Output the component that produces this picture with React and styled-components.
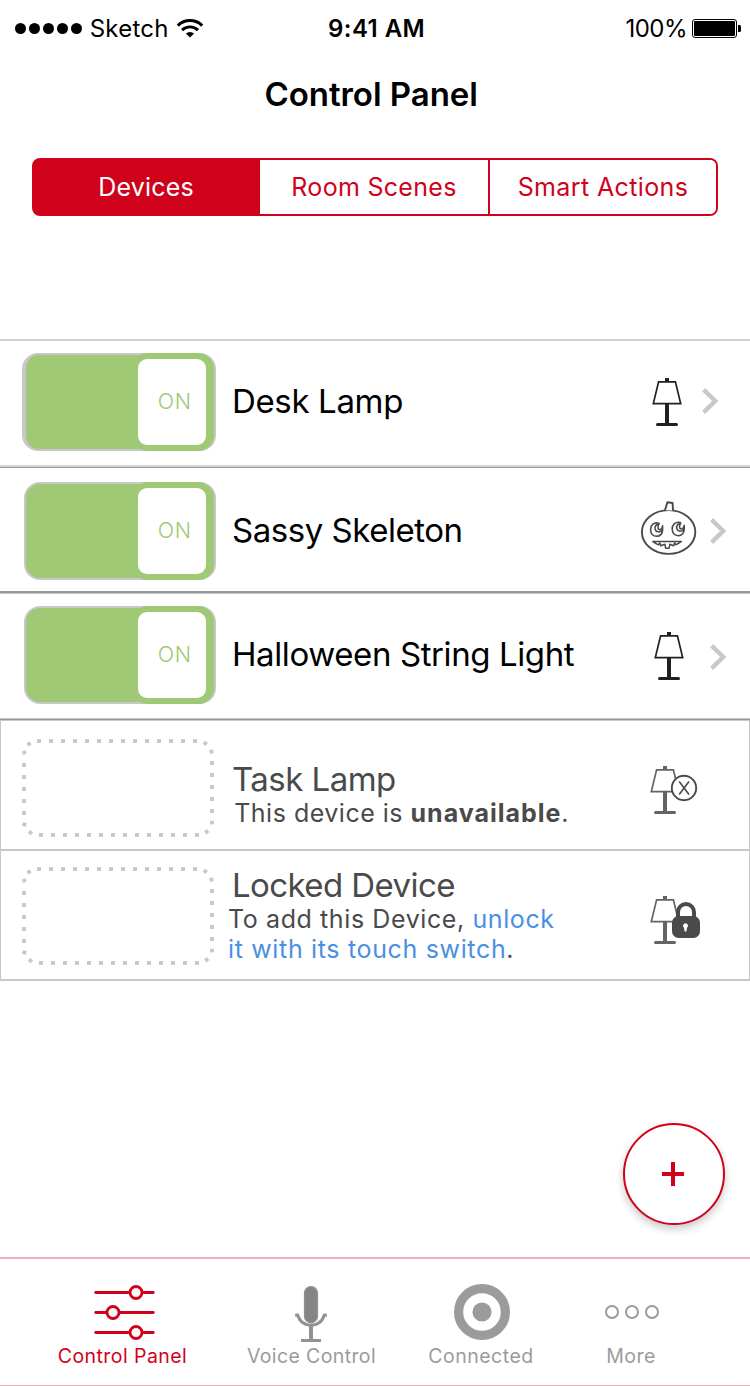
import React from 'react';
import styled, { createGlobalStyle } from 'styled-components';

const RED = '#d0021b';
const GREEN = '#a0c976';
const SILVER = '#c8c7cc';
const SLATE = '#4a4a4a';
const GREY = '#9b9b9b';

const GlobalStyle = createGlobalStyle`
  * { box-sizing: border-box; }
  body {
    margin: 0;
    background: #fff;
    color: #000;
    font-family: Inter, "Liberation Sans", sans-serif;
  }
  button { font: inherit; color: inherit; background: none; border: 0; padding: 0; margin: 0; }
  svg { display: block; flex: none; overflow: visible; }
`;

const Screen = styled.div`
  width: 750px;
  height: 1386px;
  display: flex;
  flex-direction: column;
  overflow: hidden;
  background: #fff;
`;

/* Status bar */

const StatusBar = styled.div`
  display: grid;
  grid-template-columns: 328px 1fr auto;
  height: 57px;
  align-items: center;
  padding-right: 9px;
  font-size: 24px;
  line-height: 30px;
  white-space: nowrap;
`;

const Carrier = styled.div`
  display: flex;
  align-items: center;
  padding-left: 14.6px;
  letter-spacing: 0.25px;
`;

const SignalDots = styled.div`
  display: flex;
  gap: 2.8px;
  margin-right: 8px;
`;

const SignalDot = styled.i`
  width: 11.2px;
  height: 11.2px;
  border-radius: 50%;
  background: #000;
`;

const WifiSlot = styled.span`
  margin-left: 7px;
`;

const Clock = styled.div`
  font-weight: 600;
  letter-spacing: 0.45px;
`;

const BatteryStatus = styled.div`
  display: flex;
  align-items: center;
  gap: 5px;
  letter-spacing: -0.51px;
`;

/* Header */

const Title = styled.h1`
  margin: 17px 0 0 264.4px;
  font-size: 33px;
  line-height: 40px;
  font-weight: 600;
  letter-spacing: -0.03px;
`;

const Segments = styled.div`
  display: grid;
  grid-template-columns: 226px 228px 228px;
  width: 686px;
  height: 58px;
  margin: 44px 32px 123px;
  border: 2px solid ${RED};
  border-radius: 8px;
  background: linear-gradient(90deg, ${RED} 226px, #fff 226px);
  overflow: hidden;
`;

const Segment = styled.button`
  font-size: 25px;
  line-height: 30px;
  letter-spacing: ${(p) => p.$spacing}px;
  color: ${(p) => (p.$active ? '#fff' : RED)};
  background: ${(p) => (p.$active ? RED : '#fff')};
  padding-right: ${(p) => (p.$active ? 2 : 0)}px;
  border-left: ${(p) => (p.$divided ? `2px solid ${RED}` : '0')};
`;

/* Device list */

const DeviceRow = styled.div`
  display: flex;
  align-items: flex-start;
  height: ${(p) => p.$height}px;
  border-top: ${(p) => p.$top || '0'};
  border-bottom: ${(p) => p.$bottom};
  box-shadow: ${(p) => (p.$boxed ? `inset 1px 0 ${SILVER}, inset -1px 0 ${SILVER}` : 'none')}${(p) => (p.$boxed && p.$top ? `, inset 0 1px ${SILVER}` : '')};
`;

const SwitchSlot = styled.div`
  width: 232px;
  flex: none;
  padding-left: ${(p) => p.$left}px;
  padding-top: ${(p) => p.$top}px;
`;

const SwitchTrack = styled.button`
  display: flex;
  justify-content: flex-end;
  width: ${(p) => (p.$wide ? 194 : 192)}px;
  height: 98px;
  border: 2px solid ${SILVER};
  border-left-width: ${(p) => (p.$wide ? 4 : 2)}px;
  border-radius: 16px;
  background: ${GREEN};
`;

const SwitchCap = styled.span`
  width: 82px;
  height: 98px;
  margin-top: -2px;
  padding: 6px 8px 6px 6px;
  border-radius: 16px;
  background: ${GREEN};
`;

const SwitchKnob = styled.span`
  display: block;
  height: 86px;
  padding-left: 19.8px;
  border-radius: 9px;
  background: #fff;
  color: ${GREEN};
  font-size: 21.5px;
  font-weight: 350;
  line-height: 84px;
  letter-spacing: 0.7px;
  text-align: left;
`;

const DeviceText = styled.div`
  width: 408px;
  flex: none;
  padding-top: ${(p) => p.$top}px;
  color: ${(p) => (p.$muted ? SLATE : '#000')};
`;

const DeviceName = styled.div`
  font-size: 33px;
  line-height: 40px;
  letter-spacing: ${(p) => p.$spacing}px;
  white-space: nowrap;
`;

const DeviceNote = styled.div`
  margin-top: -1px;
  margin-left: ${(p) => p.$shift}px;
  font-size: 25px;
  line-height: 30px;
  letter-spacing: ${(p) => p.$spacing}px;
  white-space: nowrap;
`;

const Strong = styled.b`
  font-weight: 700;
  letter-spacing: 0.98px;
`;

const NoteLink = styled.a`
  color: #4a90e2;
  letter-spacing: ${(p) => p.$spacing}px;
`;

const IconSlot = styled.div`
  flex: none;
  width: ${(p) => p.$width}px;
  padding-left: ${(p) => p.$left}px;
  padding-top: ${(p) => p.$top}px;
`;

const ChevronSlot = styled.div`
  padding-top: ${(p) => p.$top}px;
`;

/* Floating add button */

const AddButton = styled.button`
  display: flex;
  align-items: center;
  justify-content: center;
  align-self: flex-end;
  width: 102px;
  height: 102px;
  margin: auto 25px 32px 0;
  padding-right: 2px;
  border: 2px solid ${RED};
  border-radius: 50%;
  background: #fff;
  box-shadow: 0 4px 8px rgba(0, 0, 0, 0.22);
`;

/* Tab bar */

const TabBar = styled.nav`
  display: grid;
  grid-template-columns: 189px 189px 150px 150px;
  height: 129px;
  padding: 20px 0 0 28px;
  border-top: 2px solid #f0b0b7;
  border-bottom: 1px solid #f0b0b7;
`;

const Tab = styled.button`
  display: flex;
  flex-direction: column;
  align-items: center;
  color: ${(p) => (p.$active ? RED : GREY)};
  font-size: 19.5px;
  line-height: 24px;
  letter-spacing: ${(p) => p.$spacing}px;
  white-space: nowrap;
`;

const WifiIcon = () => (
  <svg width="28" height="19" viewBox="0 0 28 19" fill="none">
    <path d="M1.8 6.6A17.4 17.4 0 0 1 26.2 6.6" stroke="#000" strokeWidth="3" />
    <path d="M6 11.1A11.5 11.5 0 0 1 22 11.1" stroke="#000" strokeWidth="2.9" />
    <path d="M9.9 14.6A6 6 0 0 1 18.1 14.6L14 18.6Z" fill="#000" />
  </svg>
);

const BatteryIcon = () => (
  <svg width="49" height="19" viewBox="0 0 49 19">
    <rect x="0.5" y="0.5" width="44" height="18" rx="2.5" fill="#fff" stroke="#000" />
    <rect x="2" y="2" width="41" height="15" rx="1" />
    <path d="M46 6h1.5a1.5 1.5 0 0 1 1.5 1.5v4a1.5 1.5 0 0 1-1.5 1.5H46z" />
  </svg>
);

const LampShape = ({ color }) => (
  <g fill={color}>
    <rect x="13" y="0" width="4" height="4" />
    <rect x="13" y="26" width="4" height="20" />
    <rect x="4" y="45" width="22" height="3" rx="1.5" />
    <path d="M6.6 3.9H23.4L28.7 25.6H1.3Z" fill="#fff" stroke={color} strokeWidth="1.7" />
  </g>
);

const LampIcon = () => (
  <svg width="30" height="48" viewBox="0 0 30 48"><LampShape color="#231f20" /></svg>
);

const UnavailableLampIcon = () => (
  <svg width="48" height="48" viewBox="0 0 48 48">
    <LampShape color="#656363" />
    <circle cx="34" cy="22" r="12.2" fill="#fff" stroke={SLATE} strokeWidth="1.9" />
    <path d="M29.2 15.5L39 28.5M39 15.5L29.2 28.5" stroke={SLATE} strokeWidth="1.6" />
  </svg>
);

const LockedLampIcon = () => (
  <svg width="50" height="48" viewBox="0 0 50 48">
    <LampShape color="#656363" />
    <path d="M28 22V16a8 8 0 0 1 16 0v6" fill="#fff" stroke={SLATE} strokeWidth="4" />
    <rect x="22" y="20" width="28" height="22" rx="6.5" fill={SLATE} />
    <path d="M35.5 27.3a2.5 2.5 0 0 1 1.5 4.5L36.4 35.4h-1.8L34 31.8a2.5 2.5 0 0 1 1.5-4.5z" fill="#fff" />
  </svg>
);

const PumpkinEye = ({ x, y }) => (
  <path
    transform={`translate(${x} ${y})`}
    d="M2.2 -6.2C-2.6 -7.6 -6 -4.2 -6 0C-6 4.2 -3.6 6.9 0 6.9C3.8 6.9 6 4 6 0.4V-3.6C5.6 0.8 1.8 1.2 1.4 -1.4C1.2 -3 1.6 -4.6 2.6 -5.8C-0.8 -5.2 -2.2 -2.6 -1.4 0C-0.6 2.8 3.6 3.4 5.8 0.6"
  />
);

const PumpkinIcon = () => (
  <svg width="58" height="54" viewBox="0 0 58 54" fill="none" stroke={SLATE} strokeWidth="1.9" strokeLinejoin="round">
    <ellipse cx="28.6" cy="31" rx="26.7" ry="21.9" />
    <path d="M25 9.3L27.4 1.2L32.6 2L33 9.5" fill="#fff" />
    <g strokeWidth="1.6">
      <PumpkinEye x={16.6} y={28.4} />
      <PumpkinEye x={38.2} y={27.8} />
    </g>
    <path
      d="M12.8 40.4H41.4C39.5 41.8 37.4 43.2 35.8 43.8L34.5 42L33.6 44.8L29.8 43.3L29.2 47.2H25.6L25 43.3L20.8 44.8L19.8 42L18.6 43.8C16.4 43.2 14.4 41.8 12.8 40.4Z"
      strokeWidth="1.5"
    />
  </svg>
);

const Chevron = () => (
  <svg width="16" height="26" viewBox="0 0 16 26" fill="none">
    <path d="M1.6 1.6L13.2 13L1.6 24.4" stroke={SILVER} strokeWidth="4.4" />
  </svg>
);

const CORNER_DOTS = [
  [7, 5, -40], [2.3, 13.6, -12],
  [183.3, 4.3, 35], [189.5, 12.6, 72],
  [2.3, 85.5, 20], [8.5, 93.6, 40],
  [184.7, 92.7, -40], [190, 83.6, -12],
];

const DottedOutline = () => (
  <svg width="192" height="98" viewBox="0 0 192 98" fill="none">
    <g stroke={SILVER} strokeWidth="4" strokeDasharray="4 8">
      <path d="M15 2H175" />
      <path d="M17 96H177" />
      <path d="M2 24V76" />
      <path d="M190 22V74" />
    </g>
    {CORNER_DOTS.map(([x, y, angle]) => (
      <rect key={`${x}-${y}`} x={x - 1.9} y={y - 1.9} width="3.8" height="3.8" fill={SILVER} transform={`rotate(${angle} ${x} ${y})`} />
    ))}
  </svg>
);

const PlusIcon = () => (
  <svg width="22" height="24" viewBox="0 0 22 24" fill={RED}>
    <rect x="0" y="10" width="22" height="4" />
    <rect x="9" y="0" width="4" height="24" />
  </svg>
);

const SlidersIcon = () => (
  <svg width="75" height="65" viewBox="0 0 75 65" stroke={RED} strokeWidth="2.8" strokeLinecap="round">
    <path d="M10.7 13.5H68.3M10.7 33.5H68.3M10.7 53.5H68.3" />
    <g fill="#f8f8f8">
      <circle cx="51" cy="13.5" r="6" />
      <circle cx="28" cy="33.5" r="6" />
      <circle cx="51" cy="53.5" r="6" />
    </g>
  </svg>
);

const MicIcon = () => (
  <svg width="45" height="65" viewBox="0 0 45 65" fill="none">
    <path d="M6.2 36.2H8.6C10.8 42.2 15.4 46.2 22 46.2S33.2 42.2 35.4 36.2H37.8" stroke="#929292" strokeWidth="3.2" />
    <path d="M22 46V61" stroke="#929292" strokeWidth="4" />
    <path d="M12 61.5H32" stroke="#929292" strokeWidth="3" />
    <rect x="15.6" y="7.6" width="12.8" height="36" rx="6.2" fill="#858585" stroke="#929292" strokeWidth="1.4" />
  </svg>
);

const TargetIcon = () => (
  <svg width="60" height="65" viewBox="0 0 60 65">
    <circle cx="31" cy="33" r="23.4" fill="#fff" stroke={GREY} strokeWidth="9.2" />
    <circle cx="31" cy="33" r="9.6" fill={GREY} />
  </svg>
);

const MoreIcon = () => (
  <svg width="60" height="65" viewBox="0 0 60 65" fill="none" stroke={GREY} strokeWidth="2">
    <circle cx="11" cy="33" r="6" />
    <circle cx="31" cy="33" r="6" />
    <circle cx="51" cy="33" r="6" />
  </svg>
);

const Switch = ({ wide }) => (
  <SwitchTrack $wide={wide}>
    <SwitchCap><SwitchKnob>ON</SwitchKnob></SwitchCap>
  </SwitchTrack>
);

export default function App() {
  return (
    <Screen>
      <GlobalStyle />
      <StatusBar>
        <Carrier>
          <SignalDots>
            {[0, 1, 2, 3, 4].map((n) => <SignalDot key={n} />)}
          </SignalDots>
          Sketch
          <WifiSlot><WifiIcon /></WifiSlot>
        </Carrier>
        <Clock>9:41 AM</Clock>
        <BatteryStatus>100%<BatteryIcon /></BatteryStatus>
      </StatusBar>
      <Title>Control Panel</Title>
      <Segments>
        <Segment $active $spacing={0.2}>Devices</Segment>
        <Segment $spacing={0.3}>Room Scenes</Segment>
        <Segment $divided $spacing={0.38}>Smart Actions</Segment>
      </Segments>

      <DeviceRow $height={128} $top="2px solid #d2d2d2" $bottom="2px solid #d6d6d6">
        <SwitchSlot $left={22} $top={12}><Switch wide /></SwitchSlot>
        <DeviceText $top={40}><DeviceName $spacing={-0.35}>Desk Lamp</DeviceName></DeviceText>
        <IconSlot $width={62} $left={12} $top={37}><LampIcon /></IconSlot>
        <ChevronSlot $top={47}><Chevron /></ChevronSlot>
      </DeviceRow>
      <DeviceRow $height={126} $top="1px solid #979797" $bottom="2px solid #979797">
        <SwitchSlot $left={24} $top={14}><Switch /></SwitchSlot>
        <DeviceText $top={42}><DeviceName $spacing={-0.47}>Sassy Skeleton</DeviceName></DeviceText>
        <IconSlot $width={70} $left={0} $top={33}><PumpkinIcon /></IconSlot>
        <ChevronSlot $top={50}><Chevron /></ChevronSlot>
      </DeviceRow>
      <DeviceRow $height={126} $top={`1px solid ${SILVER}`} $bottom={`1px solid ${SILVER}`}>
        <SwitchSlot $left={24} $top={12}><Switch /></SwitchSlot>
        <DeviceText $top={40}><DeviceName $spacing={-0.4}>Halloween String Light</DeviceName></DeviceText>
        <IconSlot $width={70} $left={14} $top={38}><LampIcon /></IconSlot>
        <ChevronSlot $top={50}><Chevron /></ChevronSlot>
      </DeviceRow>
      <DeviceRow $height={132} $boxed $top="1px solid #979797" $bottom={`2px solid ${SILVER}`}>
        <SwitchSlot $left={22} $top={19}><DottedOutline /></SwitchSlot>
        <DeviceText $muted $top={39}>
          <DeviceName $spacing={-0.54}>Task Lamp</DeviceName>
          <DeviceNote $shift={2.2} $spacing={0.5}>This device is <Strong>unavailable</Strong>.</DeviceNote>
        </DeviceText>
        <IconSlot $width={70} $left={10} $top={46}><UnavailableLampIcon /></IconSlot>
      </DeviceRow>
      <DeviceRow $height={130} $boxed $bottom={`2px solid ${SILVER}`}>
        <SwitchSlot $left={22} $top={16}><DottedOutline /></SwitchSlot>
        <DeviceText $muted $top={14}>
          <DeviceName $spacing={-0.58}>Locked Device</DeviceName>
          <DeviceNote $shift={-4} $spacing={0.6}>
            To add this Device, <NoteLink $spacing={0.58}>unlock</NoteLink><br />
            <NoteLink $spacing={0.66}>it with its touch switch</NoteLink>.
          </DeviceNote>
        </DeviceText>
        <IconSlot $width={70} $left={10} $top={45}><LockedLampIcon /></IconSlot>
      </DeviceRow>

      <AddButton><PlusIcon /></AddButton>

      <TabBar>
        <Tab $active $spacing={0.43}><SlidersIcon />Control Panel</Tab>
        <Tab $spacing={0.38}><MicIcon />Voice Control</Tab>
        <Tab $spacing={0.52}><TargetIcon />Connected</Tab>
        <Tab $spacing={0.5}><MoreIcon />More</Tab>
      </TabBar>
    </Screen>
  );
}
